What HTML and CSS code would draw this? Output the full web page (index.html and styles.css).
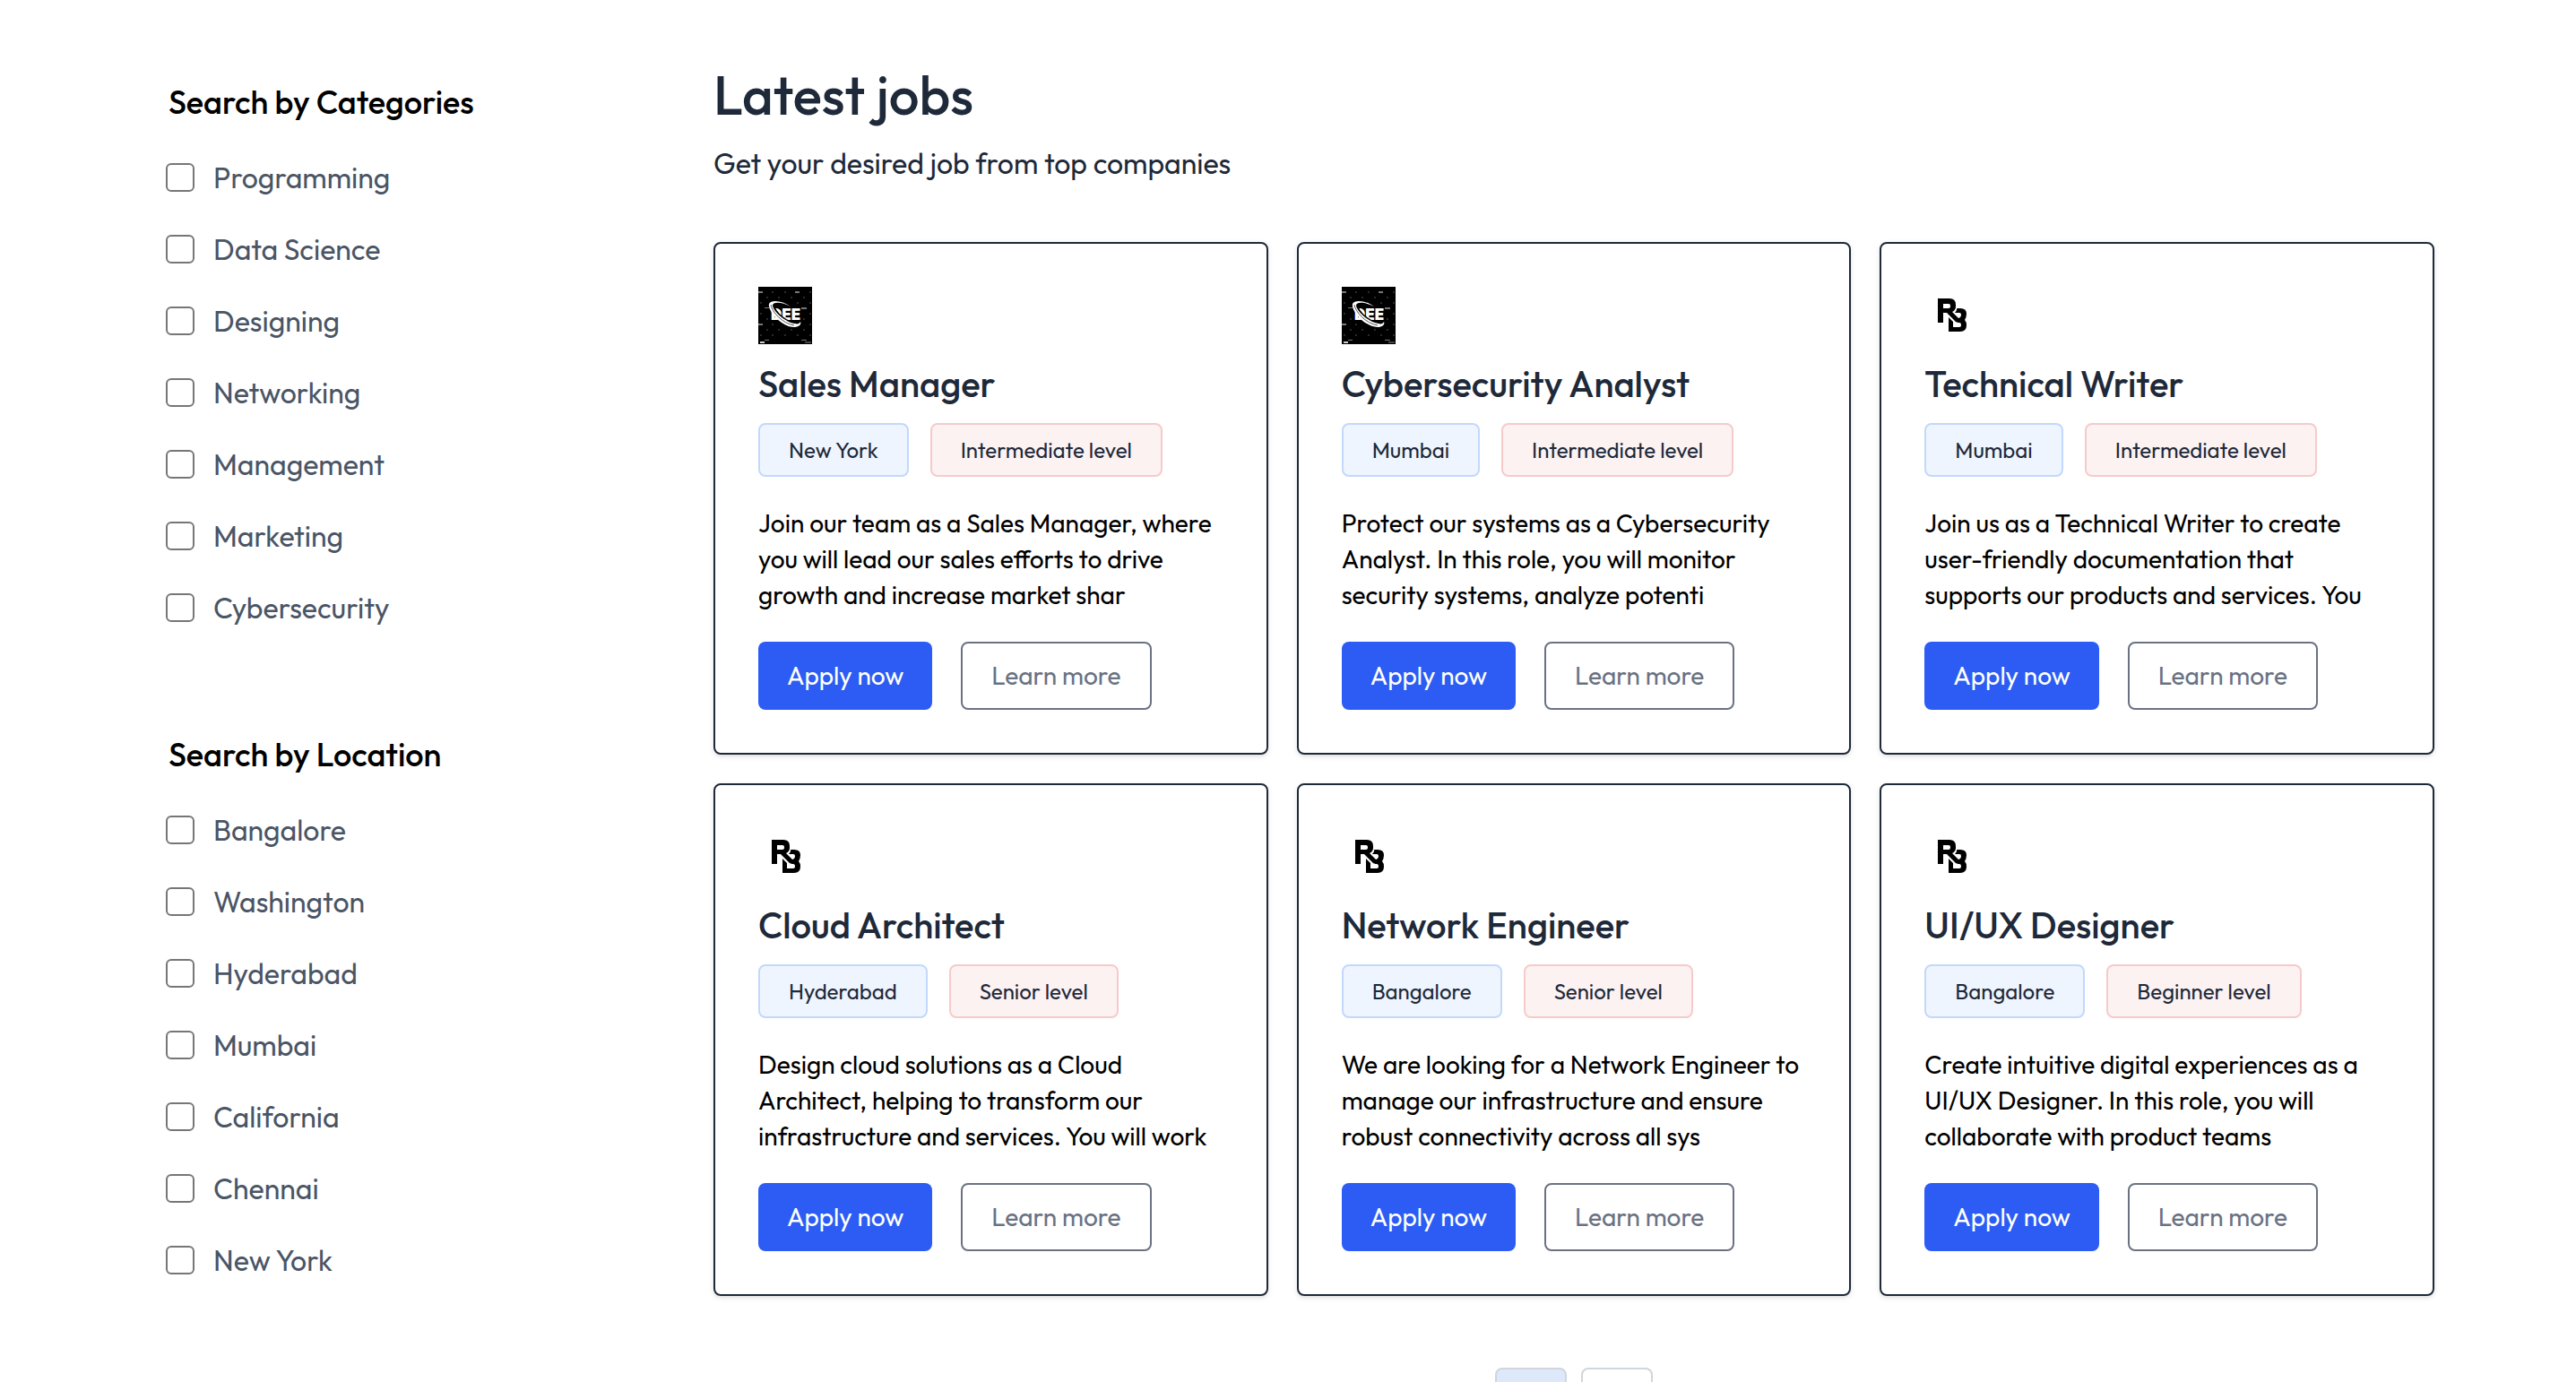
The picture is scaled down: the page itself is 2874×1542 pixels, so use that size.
FILE: index.html
```html
<!DOCTYPE html>
<html lang="en">
<head>
<meta charset="utf-8">
<meta name="viewport" content="width=device-width, initial-scale=1">
<title>Latest jobs</title>
<link rel="stylesheet" href="styles.css">
</head>
<body>
<svg class="sprite" aria-hidden="true">
  <symbol id="dee-back" viewBox="0 0 60 64">
    <rect width="60" height="64" fill="#000"/>
    <g fill="#777">
      <rect x="0" y="5" width="5" height="2"/><rect x="41" y="5" width="5" height="2"/>
      <rect x="7" y="23" width="5" height="1"/><rect x="48" y="23" width="6" height="2"/>
      <rect x="0" y="41" width="5" height="2"/><rect x="7" y="59" width="5" height="1"/>
      <rect x="48" y="59" width="6" height="1"/><rect x="52" y="61" width="7" height="2" fill="#444"/>
      <rect x="2" y="61" width="5" height="2" fill="#ccc"/>
    </g>
    <g fill="#2a2a2a">
      <rect x="15" y="5" width="2" height="2"/><rect x="29" y="5" width="2" height="2"/><rect x="57" y="5" width="2" height="2"/>
      <rect x="9" y="11" width="2" height="2"/><rect x="22" y="11" width="2" height="2"/><rect x="36" y="11" width="2" height="2"/><rect x="50" y="11" width="2" height="2"/>
      <rect x="2" y="17" width="2" height="2"/><rect x="43" y="17" width="2" height="2"/><rect x="57" y="17" width="2" height="2"/>
      <rect x="2" y="29" width="2" height="2"/><rect x="57" y="29" width="2" height="2"/>
      <rect x="9" y="35" width="2" height="2"/><rect x="50" y="35" width="2" height="2"/>
      <rect x="15" y="41" width="2" height="2"/><rect x="57" y="41" width="2" height="2"/>
      <rect x="9" y="47" width="2" height="2"/><rect x="22" y="47" width="2" height="2"/><rect x="36" y="47" width="2" height="2"/><rect x="50" y="47" width="2" height="2"/>
      <rect x="2" y="53" width="2" height="2"/><rect x="15" y="53" width="2" height="2"/><rect x="29" y="53" width="2" height="2"/><rect x="43" y="53" width="2" height="2"/><rect x="57" y="53" width="2" height="2"/>
    </g>
  </symbol>
  <symbol id="dee-ring" viewBox="0 0 60 64">
    <path d="M24 17C19 15 15 17 16 22C18 31 32 42 44 43" fill="none" stroke="#000" stroke-width="5"/>
    <path d="M36 22C27 15 14 14 12 19C10 27 27 46 41 45C47 44 48 41 47 39C46 41 44 42 41 41C31 40 17 28 16 21C16 16 27 17 36 22Z" fill="#fff"/>
    <path d="M14 20C15 28 27 41 40 43" stroke="#555" fill="none" stroke-width="1"/>
  </symbol>
  <symbol id="logo-rb" viewBox="0 0 60 64">
    <path d="M15 40V13H28Q35 13 35 20V22Q35 26 31 28L39 36H42V40H36L25 29H21V40Z M21 19V24H27Q29 24 29 22V21Q29 19 27 19Z" fill-rule="evenodd"/>
    <path d="M36 24H40Q47 24 47 30Q47 34 45 37Q47 39 47 43Q47 50 40 50H27V34L32 39V45H39Q41 45 41 43Q41 40 39 40H36L38 35Q41 34 41 31Q41 29 39 29H34Q36 27 36 24Z"/>
    <path d="M36 23Q36 27 33 28L37 33" stroke="#fff" fill="none" stroke-width="1"/>
    <path d="M25 31L34 40H37" stroke="#fff" fill="none" stroke-width="1"/>
  </symbol>
</svg>

<div class="page">
  <aside class="sidebar">
    <section class="filter">
      <h2 class="filter-title">Search by Categories</h2>
      <ul class="filter-list">
        <li><label class="option"><input type="checkbox" class="box">Programming</label></li>
        <li><label class="option"><input type="checkbox" class="box">Data Science</label></li>
        <li><label class="option"><input type="checkbox" class="box">Designing</label></li>
        <li><label class="option"><input type="checkbox" class="box">Networking</label></li>
        <li><label class="option"><input type="checkbox" class="box">Management</label></li>
        <li><label class="option"><input type="checkbox" class="box">Marketing</label></li>
        <li><label class="option"><input type="checkbox" class="box">Cybersecurity</label></li>
      </ul>
    </section>
    <section class="filter">
      <h2 class="filter-title">Search by Location</h2>
      <ul class="filter-list">
        <li><label class="option"><input type="checkbox" class="box">Bangalore</label></li>
        <li><label class="option"><input type="checkbox" class="box">Washington</label></li>
        <li><label class="option"><input type="checkbox" class="box">Hyderabad</label></li>
        <li><label class="option"><input type="checkbox" class="box">Mumbai</label></li>
        <li><label class="option"><input type="checkbox" class="box">California</label></li>
        <li><label class="option"><input type="checkbox" class="box">Chennai</label></li>
        <li><label class="option"><input type="checkbox" class="box">New York</label></li>
      </ul>
    </section>
  </aside>

  <main class="jobs">
    <h1 class="jobs-title">Latest jobs</h1>
    <p class="jobs-lead">Get your desired job from top companies</p>

    <div class="job-grid">
      <article class="card">
        <svg class="logo" viewBox="0 0 60 64"><use href="#dee-back"/><text x="14" y="37" class="dee-text">DEE</text><use href="#dee-ring"/></svg>
        <h2 class="card-title">Sales Manager</h2>
        <div class="tags"><span class="tag tag-place">New York</span><span class="tag tag-level">Intermediate level</span></div>
        <p class="summary">Join our team as a Sales Manager, where you will lead our sales efforts to drive growth and increase market shar</p>
        <div class="actions"><button type="button" class="btn btn-apply">Apply now</button><button type="button" class="btn btn-more">Learn more</button></div>
      </article>
      <article class="card">
        <svg class="logo" viewBox="0 0 60 64"><use href="#dee-back"/><text x="14" y="37" class="dee-text">DEE</text><use href="#dee-ring"/></svg>
        <h2 class="card-title">Cybersecurity Analyst</h2>
        <div class="tags"><span class="tag tag-place">Mumbai</span><span class="tag tag-level">Intermediate level</span></div>
        <p class="summary">Protect our systems as a Cybersecurity Analyst. In this role, you will monitor security systems, analyze potenti</p>
        <div class="actions"><button type="button" class="btn btn-apply">Apply now</button><button type="button" class="btn btn-more">Learn more</button></div>
      </article>
      <article class="card">
        <svg class="logo" role="img" aria-label="RB"><use href="#logo-rb"/></svg>
        <h2 class="card-title">Technical Writer</h2>
        <div class="tags"><span class="tag tag-place">Mumbai</span><span class="tag tag-level">Intermediate level</span></div>
        <p class="summary">Join us as a Technical Writer to create user-friendly documentation that supports our products and services. You</p>
        <div class="actions"><button type="button" class="btn btn-apply">Apply now</button><button type="button" class="btn btn-more">Learn more</button></div>
      </article>
      <article class="card">
        <svg class="logo" role="img" aria-label="RB"><use href="#logo-rb"/></svg>
        <h2 class="card-title">Cloud Architect</h2>
        <div class="tags"><span class="tag tag-place">Hyderabad</span><span class="tag tag-level">Senior level</span></div>
        <p class="summary">Design cloud solutions as a Cloud Architect, helping to transform our infrastructure and services. You will work</p>
        <div class="actions"><button type="button" class="btn btn-apply">Apply now</button><button type="button" class="btn btn-more">Learn more</button></div>
      </article>
      <article class="card">
        <svg class="logo" role="img" aria-label="RB"><use href="#logo-rb"/></svg>
        <h2 class="card-title">Network Engineer</h2>
        <div class="tags"><span class="tag tag-place">Bangalore</span><span class="tag tag-level">Senior level</span></div>
        <p class="summary">We are looking for a Network Engineer to manage our infrastructure and ensure robust connectivity across all sys</p>
        <div class="actions"><button type="button" class="btn btn-apply">Apply now</button><button type="button" class="btn btn-more">Learn more</button></div>
      </article>
      <article class="card">
        <svg class="logo" role="img" aria-label="RB"><use href="#logo-rb"/></svg>
        <h2 class="card-title">UI/UX Designer</h2>
        <div class="tags"><span class="tag tag-place">Bangalore</span><span class="tag tag-level">Beginner level</span></div>
        <p class="summary">Create intuitive digital experiences as a UI/UX Designer. In this role, you will collaborate with product teams</p>
        <div class="actions"><button type="button" class="btn btn-apply">Apply now</button><button type="button" class="btn btn-more">Learn more</button></div>
      </article>
    </div>

    <nav class="pager" aria-label="Pages">
      <button type="button" class="page-btn page-btn-current" aria-label="Page 1" aria-current="page"></button>
      <button type="button" class="page-btn" aria-label="Page 2"></button>
    </nav>
  </main>
</div>
</body>
</html>
```
FILE: styles.css
```css
* {
  box-sizing: border-box;
}

body {
  margin: 0;
  background: #fff;
  color: #000;
  font-family: Outfit, Lato, sans-serif;
  font-size: 32px;
  line-height: 48px;
}

h1,
h2,
p,
ul {
  margin: 0;
  padding: 0;
  font-weight: 400;
}

ul {
  list-style: none;
}

.sprite {
  position: absolute;
  width: 0;
  height: 0;
}

.page {
  display: flex;
  padding: 70px 158px 80px 156px;
}

/* Filters */
.sidebar {
  display: flex;
  flex-direction: column;
  gap: 112px;
  width: 25%;
  padding: 16px 32px 0;
}

.filter-title {
  margin-bottom: 32px;
  font-size: 36px;
  font-weight: 500;
  line-height: 56px;
}

.filter-list {
  display: flex;
  flex-direction: column;
  gap: 32px;
  color: #4a5565;
}

.option {
  display: flex;
  align-items: center;
  gap: 24px;
}

.box {
  appearance: none;
  width: 32px;
  height: 32px;
  margin: 0 -3px;
  border: 2px solid #767676;
  border-radius: 6px;
  background: #fff;
}

.box:checked {
  background: #2c5cf3;
}

/* Job list */
.jobs {
  width: 75%;
  color: #1e2939;
}

.jobs-title {
  margin-bottom: 16px;
  font-size: 60px;
  font-weight: 500;
  line-height: 72px;
}

.jobs-lead {
  margin-bottom: 64px;
}

.job-grid {
  display: grid;
  grid-template-columns: repeat(3, 1fr);
  gap: 32px;
}

.card {
  padding: 48px;
  border: 2px solid #1e2939;
  border-radius: 8px;
  box-shadow: 0 2px 6px rgba(0, 0, 0, 0.1), 0 2px 4px -2px rgba(0, 0, 0, 0.1);
}

.logo {
  display: block;
  width: 60px;
  height: 64px;
}

.dee-text {
  fill: #fff;
  font: 900 17px Inter, sans-serif;
}

.card-title {
  margin: 16px 0;
  font-size: 40px;
  font-weight: 500;
  line-height: 56px;
}

.tags {
  display: flex;
  gap: 24px;
}

.tag {
  padding: 12px 32px;
  border: 2px solid;
  border-radius: 8px;
  font-size: 24px;
  line-height: 32px;
}

.tag-place {
  border-color: #c2d8fc;
  background: #eff5fe;
}

.tag-level {
  border-color: #f7caca;
  background: #fcf2f2;
}

.summary {
  margin: 32px 0;
  color: #000;
  font-size: 28px;
  line-height: 40px;
}

.actions {
  display: flex;
  gap: 32px;
}

.btn {
  padding: 16px 32px;
  border: 0;
  border-radius: 8px;
  font: inherit;
  font-size: 28px;
  line-height: 40px;
}

.btn-apply {
  background: #2c5cf3;
  color: #fff;
}

.btn-more {
  border: 2px solid #6a7282;
  background: #fff;
  color: #6a7282;
}

.pager {
  display: flex;
  justify-content: center;
  gap: 16px;
  margin-top: 80px;
}

.page-btn {
  width: 80px;
  height: 80px;
  border: 2px solid #d1d5dc;
  border-radius: 8px;
  background: #fff;
}

.page-btn-current {
  background: #dde8fb;
}
```
